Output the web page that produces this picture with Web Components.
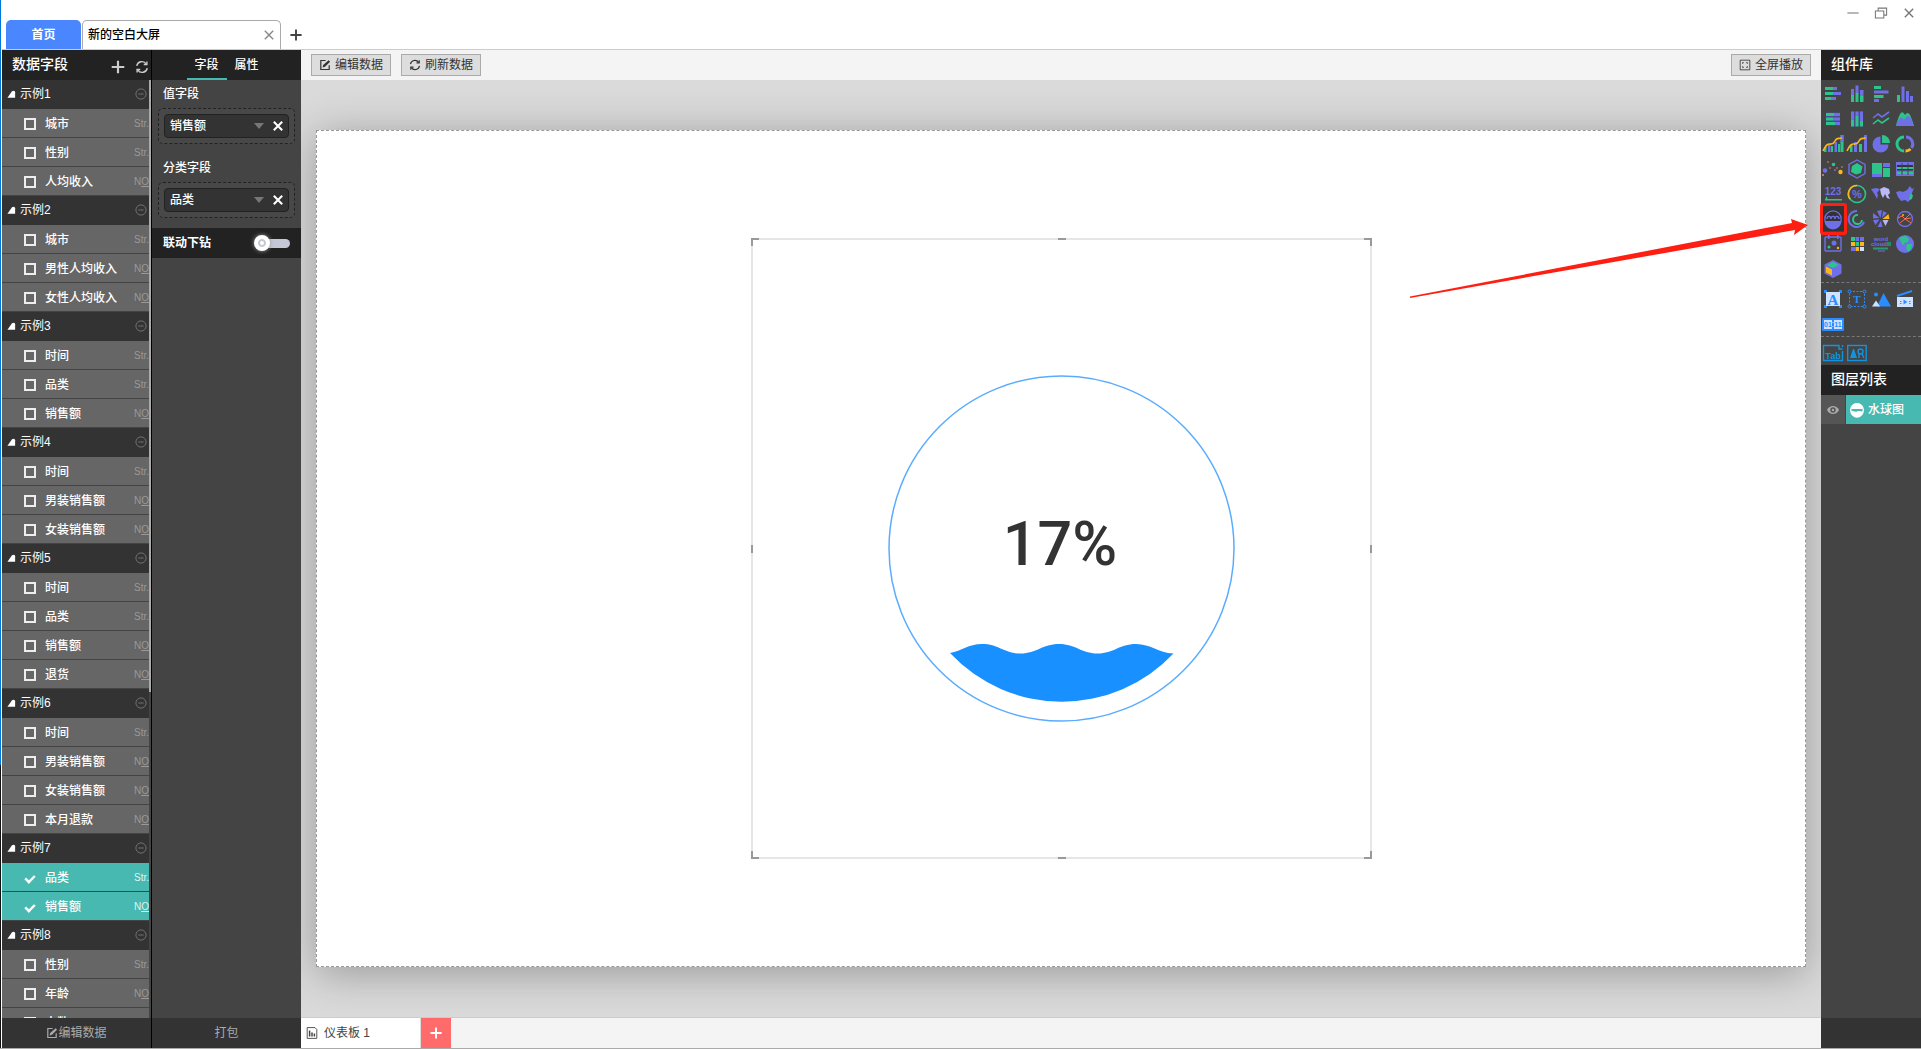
<!DOCTYPE html>
<html lang="zh-CN">
<head>
<meta charset="UTF-8">
<title>新的空白大屏</title>
<style>
	:root {
		--dark: #222;
		--panel: #444;
		--head: #333;
		--row: #666;
		--teal: #47b9b1;
		--line: #ccc;
		--soft: #f4f4f4;
	}

	body {
		margin: 0;
		font: 12px/16px "Liberation Sans", "Noto Sans CJK SC", sans-serif;
		color: #222;
		background: #fff;
	}
</style>
</head>
<body>
<app-window></app-window>

<script>
const P = '#6f6fe8', G = '#2cc48b', Y = '#fbb817', B = '#2a8cff', L = '#cfe2ff', C = '#1493dc';

// rect helper: x, y, width, height, fill
const r = (x, y, w, h, f) => `<rect x="${x}" y="${y}" width="${w}" height="${h}" fill="${f}"/>`;

const ICONS = {
	hstack: r(2, 3, 8, 3, G) + r(10, 3, 4, 3, P) + r(2, 8, 10, 3, G) + r(10, 8, 8, 3, P) + r(2, 13, 7, 3, G) + r(8, 13, 5, 3, P),
	vstack: r(4, 5, 3, 7, P) + r(4, 11, 3, 7, G) + r(8.5, 1.5, 3, 8, P) + r(8.5, 9, 3, 9, G) + r(13, 6, 3.5, 6, P) + r(13, 12, 3.5, 6, G),
	hbar: r(3, 2, 7, 3, G) + r(3, 6.5, 14.5, 3, P) + r(3, 11, 9.5, 3, G) + r(3, 15, 5, 3, P),
	vbar: r(2, 11, 3, 7, G) + r(6.5, 2.5, 3, 15.5, P) + r(11, 7, 3, 11, P) + r(15, 12, 3, 6, P),
	hfull: r(3, 3.5, 14, 13, '#4b4b8c') + r(3, 4, 9, 3, G) + r(11, 4, 6, 3, P) + r(3, 8.5, 7, 3, G) + r(10, 8.5, 7, 3, P) + r(3, 13, 9, 3, G) + r(12, 13, 5, 3, P),
	vfull: r(4, 2.5, 12, 15, '#4b4b8c') + r(4, 2.5, 3, 9, P) + r(4, 11, 3, 6.5, G) + r(8.5, 2.5, 3, 5, P) + r(8.5, 7, 3, 10.5, G) + r(13, 2.5, 3, 10, P) + r(13, 12, 3, 5.5, G),
	line: `<g fill="none" stroke-width="1.6"><path d="M2 9l5-4 4 3 7-5" stroke="${P}"/><path d="M2 15l5-4 4 3 7-5" stroke="${G}"/></g>`,
	area: `<path d="M1 17C5 2 7 1 10 6c3-4 5-3 9 11z" fill="${G}"/><path d="M1 17c3-7 5-10 7-7 2 2 3-3 5-3s4 4 6 10z" fill="${P}"/>`,
	combo1: r(1, 13, 2.5, 5, G) + r(5, 10, 2.5, 8, P) + r(8, 12, 2, 6, G) + r(11.5, 8, 2.5, 10, P) + r(15, 10, 2, 8, G) + r(17.5, 1, 3, 17, G) + r(17.5, 1, 3, 7, P) + `<path d="M0 17c3-6 4-7 6-7s4 1 6-3 3-2 7-3" fill="none" stroke="${Y}" stroke-width="1.6"/>`,
	combo2: r(3, 11, 2.5, 7, G) + r(7, 8, 3, 10, P) + r(12, 10, 3, 8, G) + r(17, 1, 3, 17, P) + `<path d="M0 17c3-6 4-7 6-7s4 1 6-3 3-2 7-3" fill="none" stroke="${Y}" stroke-width="1.6"/>`,
	pie: `<path d="M9.5 2.5a8 8 0 1 0 8 8h-8z" fill="${P}"/><path d="M11 1a8 8 0 0 1 8 8h-8z" fill="${G}"/>`,
	donut: `<g fill="none" stroke-width="3"><path d="M11 3a7 7 0 0 1 5.500 11" stroke="${P}"/><path d="M9 3a7 7 0 0 0 0 14" stroke="${G}"/><path d="M10.500 17a7 7 0 0 0 5-2" stroke="${Y}"/></g>`,
	scatter: `<g fill="${P}"><circle cx="2" cy="11.500" r="2.300"/><circle cx="12" cy="11" r="1"/></g><circle cx="10.500" cy="5.500" r="1.800" fill="${G}"/><circle cx="17.500" cy="13" r="2.200" fill="${Y}"/><g fill="#e98b6a"><circle cx="0" cy="16" r="1"/><circle cx="5" cy="3" r=".8"/><circle cx="7" cy="9" r=".8"/><circle cx="14" cy="9" r=".8"/><circle cx="19" cy="8" r=".8"/></g>`,
	radar: `<path d="M10 1l8 4.500v9L10 19l-8-4.500v-9z" fill="none" stroke="${P}" stroke-width="1.400"/><path d="M10 4l5.500 3.500L14 14l-5 1.500L4 13l1-6z" fill="${G}"/>`,
	tree: r(1, 4, 10, 14, G) + r(12, 4, 7, 4, P) + r(12, 9, 7, 9, G) + r(1, 15, 10, 3, P),
	table: r(1, 3, 18, 14, P) + r(2, 6, 16, 2, '#333') + r(2, 8, 16, 2, G) + r(2, 10, 16, 1.5, '#333') + r(2, 13, 16, 2, G) + r(6.5, 4, 1, 12, '#444') + r(12.5, 4, 1, 12, '#444'),
	num: `<text x="10" y="10.500" font-size="10" font-weight="700" text-anchor="middle" fill="${P}">123</text>` + r(2, 15, 17, 1.5, G) + `<path d="M2 16l1.500-4L5 16z" fill="${G}"/>`,
	percent: `<g fill="none" stroke-width="1.600"><circle cx="10" cy="10" r="8.500" stroke="${G}"/><path d="M10 1.500A8.500 8.500 0 0 0 3 15" stroke="${Y}"/></g><text x="10" y="14" font-size="11" font-weight="700" text-anchor="middle" fill="${P}">%</text>`,
	world: `<path d="M0 5l5-1 4 1-3 4 1 2-1 4-2-4-2-3z" fill="${P}"/><path d="M9 5l4-2 5 2 1 4-2 2 2 4-3-1-2-4-2 4-2-4z" fill="#b9b9f6"/>`,
	china: `<path d="M1 8l4-1 3 1 4-2 3-4 2 3 2-1-2 5 0 5-4 4-3-2-4 1-3-4z" fill="${P}"/><path d="M15 10l3 1-1 4-3 1z" fill="${G}"/>`,
	ball: `<circle cx="10" cy="10" r="8.200" fill="none" stroke="${P}" stroke-width="1.200"/><path d="M1.500 12h17a8.500 8.500 0 0 1-17 0z" fill="${P}"/><path d="M4 10c0-4 4-3 4 0M8 10c0-4 4-3 4 0m0 0c0-4 4-3 4 0" fill="none" stroke="${P}" stroke-width="1.400"/>`,
	ring: `<g fill="none" stroke-width="2"><path d="M10 2a8 8 0 1 0 7 11" stroke="${P}"/><path d="M11 6a4.500 4.500 0 1 0 4 5" stroke="${G}"/></g>`,
	rose: `<g fill="${P}"><path d="M9.500 9L6 2l5-1zM8.500 9L2 4v5.500zM8.500 10.500L2 11l2.500 5zM10 11.500L6.500 18h5z"/><path d="M11 9l1-7 4 2z"/></g><path d="M11.500 10l6-5 1 5z" fill="${Y}"/><path d="M11.500 11h6l-3 6z" fill="#b9b9f6"/>`,
	gauge: `<circle cx="10" cy="10" r="7.500" fill="none" stroke="${P}" stroke-width="1.300"/><path d="M3 9l4-2 3 3 5-5M5 14l5-4 6 4M10 10l6-1" fill="none" stroke="#ff6a4a" stroke-width="1"/><circle cx="8" cy="6" r="1" fill="${Y}"/>`,
	bubble: `<rect x="2" y="3" width="16" height="14" rx="1" fill="none" stroke="${P}" stroke-width="1.400"/>` + r(5, 1, 1.5, 4, P) + r(14, 1, 1.5, 4, P) + `<circle cx="11" cy="9" r="2.500" fill="${P}"/><circle cx="6" cy="13" r="1.500" fill="${G}"/><circle cx="15" cy="14" r="1.200" fill="${Y}"/>`,
	heat: r(4, 3, 4, 4, G) + r(8.5, 3, 3.5, 4, P) + r(13, 3, 4, 4, P) + r(4, 8, 4, 4, Y) + r(8.5, 8, 3.5, 4, G) + r(13, 8, 4, 4, Y) + r(4, 13, 4, 4, P) + r(8.5, 13, 3.5, 4, Y) + r(13, 13, 4, 4, L),
	word: `<g font-size="6" font-weight="700" text-anchor="middle"><text x="10" y="7" fill="${P}">word</text><text x="8" y="12" fill="${P}">cloud</text></g>` + r(2, 13.5, 15, 2, '#2a9a72') + r(7, 16.5, 7, 1, P) + r(16, 8, 4, 4, '#258a67'),
	globe: `<circle cx="10" cy="10" r="9" fill="${P}"/><path d="M5 3l6-1 3 3-1 3-4 1 1 3-3-2-2-4zM12 10l5 0-1 5-3 3-2-4z" fill="${G}"/>`,
	cube: `<path d="M10 1l8.500 4.500v9L10 19l-8.500-4.500v-9z" fill="${P}"/><path d="M10 3l6 3-6 3-6-3z" fill="${G}"/><path d="M3 7.500l6 3v6L3 13.500z" fill="${Y}"/>`,
	text: r(3, 3, 14, 14, L) + `<text x="10" y="15.500" font-family="Liberation Serif" font-size="15" font-weight="700" text-anchor="middle" fill="${B}">A</text><path d="M1 1h3v2H3v1H1zM19 1h-3v2h1v1h2zM1 19h3v-2H3v-1H1zM19 19h-3v-2h1v-1h2z" fill="${B}"/>`,
	tbox: `<rect x="2.500" y="2.500" width="15" height="15" fill="none" stroke="${B}" stroke-dasharray="2 1.500"/><text x="10" y="14" font-family="Liberation Serif" font-size="11" font-weight="700" text-anchor="middle" fill="${B}">T</text><g fill="#444" stroke="${B}"><circle cx="2.500" cy="2.500" r="1.500"/><circle cx="17.500" cy="2.500" r="1.500"/><circle cx="2.500" cy="17.500" r="1.500"/><circle cx="17.500" cy="17.500" r="1.500"/></g>`,
	image: `<path d="M6 17.500L12.500 4 20 17.500z" fill="${B}"/><path d="M1 17.500l4-6 4 6z" fill="${L}"/><circle cx="5" cy="5.500" r="2" fill="${B}"/>`,
	video: `<path d="M2 7l15-5" stroke="${B}" stroke-width="2"/>` + r(2, 8, 16, 10, L) + `<path d="M8.500 10.500l4 2.500-4 2.500z" fill="${B}"/>` + r(5, 12, 1.5, 1, B) + r(5, 14, 1.5, 1, B) + r(14, 12, 1.5, 1, B) + r(14, 14, 1.5, 1, B),
	clock: `<rect x="-1" y="4" width="22" height="13" rx="1" fill="${B}"/>` + r(1, 6, 8, 9, L) + r(11, 6, 8, 9, L) + `<g font-size="7" font-weight="700" text-anchor="middle" fill="${B}"><text x="5" y="13">01</text><text x="15" y="13">11</text></g>` + r(9.5, 8, 1, 1, L) + r(9.5, 12, 1, 1, L),
	tab: `<path d="M15 2.500H.500v15h19V8M15 2.500h1V6h3.500M19.500 2v2" fill="none" stroke="${C}" stroke-width="1.400"/><text x="10" y="15.500" font-size="9" font-weight="700" text-anchor="middle" fill="${C}">Tab</text>`,
	shape: `<rect x=".700" y="2.500" width="18.500" height="15" fill="none" stroke="${C}" stroke-width="1.400"/><path d="M3 15l3-9h1l3 9z" fill="${C}"/><circle cx="13.500" cy="8.500" r="2.500" fill="none" stroke="${C}" stroke-width="1.400"/><path d="M12 11v4m3-4l2 4" stroke="${C}" stroke-width="1.400"/>`,

	// interface glyphs, drawn in the current colour
	plus: `<path d="M10 3v14M3 10h14" stroke="currentColor" stroke-width="2.400"/>`,
	close: `<path d="M4 4l12 12M16 4L4 16" stroke="currentColor" stroke-width="2"/>`,
	cross: `<path d="M3 3l14 14M17 3L3 17" stroke="currentColor" stroke-width="3.400"/>`,
	sync: `<g fill="none" stroke="currentColor" stroke-width="2"><path d="M2.500 8.500a7.500 7.500 0 0 1 13.500-3M17.500 11.500a7.500 7.500 0 0 1-13.500 3"/><path d="M17 2v4.500h-4.500M3 18v-4.500h4.500"/></g>`,
	edit: `<path d="M11 2.500H3v15h14v-7" fill="none" stroke="currentColor" stroke-width="2"/><path d="M6 14l1-4 9-8 2.500 2.500L10 13z" fill="currentColor"/>`,
	full: `<path d="M2 2h16v16H2z" fill="none" stroke="currentColor" stroke-width="1.400"/><path d="M6 8V6h2M12 6h2v2M14 12v2h-2M8 14H6v-2" fill="none" stroke="currentColor" stroke-width="1.400"/>`,
	minus: `<circle cx="10" cy="10" r="8.500" fill="none" stroke="currentColor" stroke-width="1.500"/><path d="M5.500 10h9" stroke="currentColor" stroke-width="1.500"/>`,
	caret: `<path d="M0 4h20L10 16z" fill="currentColor"/>`,
	fold: `<path d="M1 17L11 3q6-3 7 2v12z" fill="currentColor"/>`,
	sheet: `<path d="M2 1h13l3 3v15H2z" fill="none" stroke="currentColor" stroke-width="1.500"/><path d="M6 6v10M10 9v7M14 11v5" stroke="currentColor" stroke-width="2.500"/>`,
	eye: `<path d="M0 10c4-9 16-9 20 0-4 9-16 9-20 0z" fill="currentColor"/><circle cx="10" cy="10" r="4.500" fill="#555"/><circle cx="10" cy="10" r="2" fill="currentColor"/>`,
	level: `<circle cx="10" cy="10" r="9" fill="none" stroke="currentColor" stroke-width="2"/><path d="M1 12c3-3 5 2 9 0s6 1 9 0a9 9 0 0 1-18 0z" fill="currentColor"/><path d="M2 8.500a8 8 0 0 1 16 0z" fill="currentColor"/>`,
	min: `<path d="M2 10h16" stroke="currentColor" stroke-width="1.500"/>`,
	restore: `<path d="M2 7h12v10H2zM6 7V3h12v10h-4" fill="none" stroke="currentColor" stroke-width="1.500"/>`
};

class UiIcon extends HTMLElement {
	static get observedAttributes() {
		return ['name'];
	}

	constructor() {
		super();
		this.attachShadow({mode: 'open'});
	}

	attributeChangedCallback(name, oldValue, newValue) {
		this.shadowRoot.innerHTML = `
		<style>
			:host { display: block; flex: none; width: 12px; height: 12px; }
			svg { display: block; width: 100%; height: 100%; overflow: visible; font-family: "Liberation Sans", sans-serif; }
		</style>
		<svg viewBox="0 0 20 20" aria-hidden="true">${ICONS[newValue] || ''}</svg>`;
	}
}

// Top strip: document tabs and window buttons
class TitleBar extends HTMLElement {
	constructor() {
		super();
		this.attachShadow({mode: 'open'}).innerHTML = `
		<style>
			:host {
				display: flex;
				justify-content: space-between;
				height: 49px;
				border-bottom: 1px solid var(--line);
				background: #fff;
			}

			button {
				font: inherit;
				color: inherit;
				padding: 0;
				border: 0;
				background: none;
			}

			nav {
				display: flex;
				align-items: flex-end;
				gap: 1px;
				padding-left: 4px;
			}

			.home, .doc, .add {
				height: 29px;
				border-radius: 5px 5px 0 0;
			}

			.home {
				width: 75px;
				background: #4a87ff;
				color: #fff;
				font-weight: 700;
			}

			.doc {
				display: flex;
				align-items: center;
				justify-content: space-between;
				box-sizing: border-box;
				width: 199px;
				padding: 0 4px 0 5px;
				border: 1px solid #aaa;
				border-bottom: 0;
				color: #000;
				font-weight: 500;

				& button { color: #888; }
				& ui-icon { width: 14px; height: 14px; }
			}

			.add {
				display: grid;
				place-items: center;
				width: 28px;
				color: #444;

				& ui-icon { width: 16px; height: 16px; }
			}

			.win {
				display: flex;
				gap: 14px;
				padding: 6px 5px 0 0;
				align-items: flex-start;
				color: #777;

				& ui-icon { width: 14px; height: 14px; }
			}
		</style>
		<nav>
			<button class="home">首页</button>
			<div class="doc"><span>新的空白大屏</span><button aria-label="关闭"><ui-icon name="close"></ui-icon></button></div>
			<button class="add" aria-label="新建"><ui-icon name="plus"></ui-icon></button>
		</nav>
		<div class="win">
			<button aria-label="最小化"><ui-icon name="min"></ui-icon></button>
			<button aria-label="还原"><ui-icon name="restore"></ui-icon></button>
			<button aria-label="关闭窗口"><ui-icon name="close"></ui-icon></button>
		</div>`;
	}
}

class FieldRow extends HTMLElement {
	constructor() {
		super();
		this.attachShadow({mode: 'open'}).innerHTML = `
		<style>
			:host {
				display: block;
				height: 28px;
				border-bottom: 1px solid var(--panel);
				background: var(--row);
				color: #999;
			}

			:host([checked]) {
				background: var(--teal);
				color: #dff3f1;
			}

			label {
				display: flex;
				align-items: center;
				height: 29px;
				padding: 0 0 0 22px;
			}

			input {
				appearance: none;
				box-sizing: border-box;
				flex: none;
				width: 12px;
				height: 12px;
				margin: 0 9px 0 0;
				border: 2px solid #eee;
			}

			input:checked {
				height: 8px;
				border-width: 0 0 3px 3px;
				border-color: #fff;
				transform: rotate(-45deg) scale(.8);
			}

			.name {
				flex: 1;
				color: #fff;
				font-weight: 500;
				white-space: nowrap;
			}

			.type { font-size: 10px; }
		</style>
		<label>
			<input type="checkbox">
			<span class="name"><slot></slot></span>
			<span class="type"></span>
		</label>`;
	}

	connectedCallback() {
		let type = this.shadowRoot.querySelector('.type');
		type.innerHTML = this.getAttribute('type') === 'str' ? 'Str.' : 'N<u>O</u>';
		this.shadowRoot.querySelector('input').checked = this.hasAttribute('checked');
	}
}

class FieldGroup extends HTMLElement {
	constructor() {
		super();
		this.attachShadow({mode: 'open'}).innerHTML = `
		<style>
			:host { display: block; }

			header {
				display: flex;
				align-items: center;
				height: 28px;
				padding: 0 2px 1px 5px;
				background: var(--head);
				color: #fff;
			}

			.name { flex: 1; padding-left: 4px; }
			.fold { width: 9px; height: 9px; }
			.minus { color: #777; }
		</style>
		<header>
			<ui-icon class="fold" name="fold"></ui-icon>
			<span class="name"></span>
			<ui-icon class="minus" name="minus"></ui-icon>
		</header>
		<slot></slot>`;
	}

	connectedCallback() {
		this.shadowRoot.querySelector('.name').textContent = this.getAttribute('name');
	}
}

const DATA = [
	['示例1', '城市:str', '性别:str', '人均收入:no'],
	['示例2', '城市:str', '男性人均收入:no', '女性人均收入:no'],
	['示例3', '时间:str', '品类:str', '销售额:no'],
	['示例4', '时间:str', '男装销售额:no', '女装销售额:no'],
	['示例5', '时间:str', '品类:str', '销售额:no', '退货:no'],
	['示例6', '时间:str', '男装销售额:no', '女装销售额:no', '本月退款:no'],
	['示例7', '品类:str:on', '销售额:no:on'],
	['示例8', '性别:str', '年龄:no', '人数:no']
];

class FieldPanel extends HTMLElement {
	constructor() {
		super();
		let groups = DATA.map(([name, ...rows]) => `<field-group name="${name}">` + rows.map(row => {
			let [text, type, on] = row.split(':');
			return `<field-row type="${type}" ${on ? 'checked' : ''}>${text}</field-row>`;
		}).join('') + '</field-group>').join('');

		this.attachShadow({mode: 'open'}).innerHTML = `
		<style>
			:host {
				display: grid;
				grid-template-rows: 30px minmax(0, 1fr) 30px;
				background: var(--panel);
				border-right: 1px solid #000;
			}

			header {
				display: flex;
				align-items: center;
				gap: 8px;
				padding: 0 2px 0 10px;
				background: var(--dark);
				color: #fff;
				font-size: 14px;
			}

			h2 { flex: 1; margin: 0 0 2px; font: inherit; font-weight: 500; }

			button {
				display: flex;
				align-items: center;
				justify-content: center;
				font: inherit;
				padding: 0;
				border: 0;
				background: none;
				color: #ccc;
			}

			header button { padding-top: 3px; }
			header ui-icon { width: 14px; height: 14px; }
			header .plus { width: 18px; height: 18px; }

			.scroll {
				display: grid;
				grid-template-columns: minmax(0, 1fr) 2px;
				overflow: hidden;
			}

			.bar { height: 100%; min-height: 0; }
			.thumb { height: 64%; background: #aaa; }

			footer {
				display: grid;
				background: var(--head);

				& button { color: #aaa; }
			}
		</style>
		<header>
			<h2>数据字段</h2>
			<button aria-label="添加"><ui-icon class="plus" name="plus"></ui-icon></button>
			<button aria-label="刷新"><ui-icon name="sync"></ui-icon></button>
		</header>
		<div class="scroll"><div>${groups}</div><div class="thumb"></div></div>
		<footer><button><ui-icon name="edit"></ui-icon>编辑数据</button></footer>`;
	}
}

// One dashed drop zone with the field that is bound to it
class FieldSlot extends HTMLElement {
	constructor() {
		super();
		this.attachShadow({mode: 'open'}).innerHTML = `
		<style>
			:host { display: block; padding: 0 6px; }

			label {
				display: block;
				height: 28px;
				padding-left: 5px;
				line-height: 28px;
				color: #fff;
				font-weight: 500;
			}

			.zone {
				padding: 5px;
				border: 1px dashed #222;
				border-radius: 5px;
				background: #484848;
			}

			.chip {
				display: grid;
				grid-template-columns: minmax(0, 1fr) 10px 12px;
				align-items: center;
				gap: 8px;
				height: 22px;
				padding: 0 4px 0 5px;
				border: 1px solid #222;
				border-radius: 4px;
				background: var(--head);
				color: #fff;
			}

			select {
				appearance: none;
				font: inherit;
				font-weight: 500;
				color: inherit;
				padding: 0;
				border: 0;
				background: none;
			}

			button { padding: 0; border: 0; background: none; color: inherit; }
			.caret { width: 10px; height: 10px; color: #777; }
		</style>
		<label for="field"></label>
		<div class="zone">
			<div class="chip">
				<select id="field"><option></option></select>
				<ui-icon class="caret" name="caret"></ui-icon>
				<button aria-label="移除"><ui-icon name="cross"></ui-icon></button>
			</div>
		</div>`;
	}

	connectedCallback() {
		this.shadowRoot.querySelector('label').textContent = this.getAttribute('label');
		this.shadowRoot.querySelector('option').textContent = this.getAttribute('value');
	}
}

class ConfigPanel extends HTMLElement {
	constructor() {
		super();
		this.attachShadow({mode: 'open'}).innerHTML = `
		<style>
			:host {
				display: grid;
				grid-template-rows: 30px minmax(0, 1fr) 30px;
				background: var(--panel);
			}

			button { font: inherit; padding: 0; border: 0; background: none; color: #aaa; }

			nav {
				display: flex;
				justify-content: center;
				background: var(--dark);

				& button {
					width: 40px;
					padding-top: 2px;
					color: #fff;
					font-weight: 500;
					border-bottom: 2px solid transparent;
				}

				& .on { border-color: var(--teal); }
			}

			.body { display: flex; flex-direction: column; gap: 10px; }

			.drill {
				display: flex;
				align-items: center;
				justify-content: space-between;
				height: 30px;
				padding: 0 11px;
				background: var(--dark);
				color: #fff;
				font-weight: 700;
			}

			.drill input {
				appearance: none;
				display: flex;
				align-items: center;
				width: 34px;
				height: 9px;
				margin: 0;
				border-radius: 5px;
				background: #c3c7d6;
			}

			.drill input::before {
				content: "";
				box-sizing: border-box;
				width: 16px;
				height: 16px;
				margin-left: -2px;
				border: 4px solid #fff;
				border-radius: 50%;
				background: #fff;
				box-shadow: inset 0 0 0 2px #c3c7d6, 0 0 4px #999;
			}

			footer { display: grid; background: var(--head); }
		</style>
		<nav><button class="on">字段</button><button>属性</button></nav>
		<div class="body">
			<field-slot label="值字段" value="销售额"></field-slot>
			<field-slot label="分类字段" value="品类"></field-slot>
			<label class="drill">联动下钻<input type="checkbox" role="switch"></label>
		</div>
		<footer><button>打包</button></footer>`;
	}
}

class LiquidGauge extends HTMLElement {
	constructor() {
		super();
		this.attachShadow({mode: 'open'}).innerHTML = `
		<style>
			:host { display: block; width: 621px; aspect-ratio: 1; }
			svg { display: block; width: 100%; height: 100%; overflow: visible; }
			text { font: 500 61px Roboto, sans-serif; fill: #333; text-anchor: middle; }
		</style>
		<svg viewBox="0 0 621 621">
			<rect x="1" y="1" width="619" height="619" fill="none" stroke="#e6e6e6" stroke-width="2"/>
			<path d="M1 8V1h7M613 1h7v7M620 613v7h-7M8 620H1v-7M307 1h8M307 620h8M1 307v8M620 307v8" fill="none" stroke="#999" stroke-width="2"/>
			<circle cx="310.500" cy="310.500" r="172.500" fill="none" stroke="#5aacff" stroke-width="1.500"/>
			<path d="M199 415c12-2 18-9 32-9 17 0 22 9.500 38.500 9.500S291 406 308 406s22 9.500 38.500 9.500S368 406 385 406c15 0 22 9 37.500 9.500A153 153 0 0 1 199 415z" fill="#1890ff"/>
			<text x="309" y="327"></text>
		</svg>`;
	}

	connectedCallback() {
		this.shadowRoot.querySelector('text').textContent = this.getAttribute('value');
	}
}

class WorkArea extends HTMLElement {
	constructor() {
		super();
		this.attachShadow({mode: 'open'}).innerHTML = `
		<style>
			:host {
				display: grid;
				grid-template-rows: 30px minmax(0, 1fr) 31px;
				background: #dadada;
			}

			button { font: inherit; color: inherit; padding: 0; border: 0; background: none; }

			.bar {
				display: flex;
				align-items: center;
				gap: 10px;
				padding: 0 10px;
				background: var(--soft);

				& button {
					display: flex;
					align-items: center;
					justify-content: center;
					gap: 4px;
					box-sizing: border-box;
					width: 80px;
					height: 22px;
					border: 1px solid #aaa;
					background: #ddd;
					color: #333;
				}

				& .end { margin-left: auto; }
			}

			.stage {
				display: grid;
				padding: 50px 15px;
				overflow: hidden;
			}

			.canvas {
				display: grid;
				place-items: center;
				border: 1px dashed #999;
				background: #fff;
				box-shadow: 0 6px 40px rgba(0, 0, 0, .3);
			}

			.sheets {
				display: flex;
				border-top: 1px solid var(--line);
				background: var(--soft);
			}

			.sheet {
				display: flex;
				align-items: center;
				gap: 6px;
				width: 120px;
				padding-left: 5px;
				border-right: 1px solid #ddd;
				background: #fff;
				color: #444;
			}

			.add {
				display: grid;
				place-items: center;
				width: 30px;
				background: #ff6b6b;
				color: #fff;

				& ui-icon { width: 16px; height: 16px; }
			}
		</style>
		<div class="bar">
			<button><ui-icon name="edit"></ui-icon>编辑数据</button>
			<button><ui-icon name="sync"></ui-icon>刷新数据</button>
			<button class="end"><ui-icon name="full"></ui-icon>全屏播放</button>
		</div>
		<div class="stage"><div class="canvas"><slot></slot></div></div>
		<div class="sheets">
			<button class="sheet"><ui-icon name="sheet"></ui-icon>仪表板 1</button>
			<button class="add" aria-label="新建仪表板"><ui-icon name="plus"></ui-icon></button>
		</div>`;
	}
}

class PalettePanel extends HTMLElement {
	constructor() {
		super();
		let cells = names => names.split(' ').map(name =>
			`<button class="${name}" aria-label="${name}"><ui-icon name="${name}"></ui-icon></button>`).join('');

		this.attachShadow({mode: 'open'}).innerHTML = `
		<style>
			:host {
				display: grid;
				grid-template-rows: 30px auto 30px auto 1fr 30px;
				position: relative;
				background: var(--panel);
			}

			h2 {
				margin: 0;
				padding-left: 10px;
				background: var(--dark);
				color: #fff;
				font-size: 14px;
				font-weight: 500;
				line-height: 28px;
			}

			button { font: inherit; padding: 0; border: 0; background: none; }

			.set {
				display: grid;
				grid-template-columns: repeat(4, 24px);
				grid-auto-rows: 25px;
				padding: 1px 0;

				& + .set {
					padding: 3px 0 0;
					border-top: 1px dashed #777;
				}

				& button {
					display: grid;
					place-items: center;
					position: relative;
				}

				& ui-icon { width: 20px; height: 20px; }
			}

			.ball { background: var(--head); }

			/* marker round the liquid gauge button */
			.ball::after {
				content: "";
				position: absolute;
				inset: -3px -2px -4px -1px;
				border: 3px solid #ff1f12;
				border-radius: 3px;
			}

			.arrow {
				position: absolute;
				top: 166px;
				right: 100%;
				width: 411px;
				height: 84px;
				pointer-events: none;
			}

			.layer {
				display: grid;
				grid-template-columns: 24px minmax(0, 1fr);
				gap: 1px;
				height: 29px;

				& .eye { display: grid; place-items: center; background: #555; color: #aaa; }

				& .name {
					display: flex;
					align-items: center;
					gap: 4px;
					padding-left: 4px;
					background: var(--teal);
					color: #fff;
					font-weight: 500;
				}

				& .name ui-icon { width: 14px; height: 14px; }
			}

			footer { background: var(--head); }
		</style>
		<h2>组件库</h2>
		<div>
			<div class="set">${cells('hstack vstack hbar vbar hfull vfull line area combo1 combo2 pie donut scatter radar tree table num percent world china ball ring rose gauge bubble heat word globe cube')}</div>
			<div class="set">${cells('text tbox image video clock')}</div>
			<div class="set">${cells('tab shape')}</div>
		</div>
		<h2>图层列表</h2>
		<div class="layer">
			<button class="eye" aria-label="显示"><ui-icon name="eye"></ui-icon></button>
			<button class="name"><ui-icon name="level"></ui-icon>水球图</button>
		</div>
		<div></div>
		<footer></footer>
		<svg class="arrow" viewBox="0 0 411 84" aria-hidden="true">
			<path d="M0 80.500L382 7l-1-4 17 6-14 10 1-5L0 82z" fill="#ff1f12"/>
		</svg>`;
	}
}

class AppWindow extends HTMLElement {
	constructor() {
		super();
		this.attachShadow({mode: 'open'}).innerHTML = `
		<style>
			:host {
				display: grid;
				grid-template-rows: 50px minmax(0, 1fr);
				box-sizing: border-box;
				height: 100vh;
				padding-left: 2px;
				border-bottom: 1px solid #aaa;
				background: linear-gradient(#0078d7 73%, #111 73%) left / 1px 100% no-repeat;
			}

			main {
				display: grid;
				grid-template-columns: 150px 149px minmax(0, 1fr) 100px;
				grid-template-rows: minmax(0, 1fr);
			}
		</style>
		<title-bar></title-bar>
		<main>
			<field-panel></field-panel>
			<config-panel></config-panel>
			<work-area><liquid-gauge value="17%"></liquid-gauge></work-area>
			<palette-panel></palette-panel>
		</main>`;
	}
}

customElements.define('ui-icon', UiIcon);
customElements.define('title-bar', TitleBar);
customElements.define('field-row', FieldRow);
customElements.define('field-group', FieldGroup);
customElements.define('field-panel', FieldPanel);
customElements.define('field-slot', FieldSlot);
customElements.define('config-panel', ConfigPanel);
customElements.define('liquid-gauge', LiquidGauge);
customElements.define('work-area', WorkArea);
customElements.define('palette-panel', PalettePanel);
customElements.define('app-window', AppWindow);
</script>
</body>
</html>
